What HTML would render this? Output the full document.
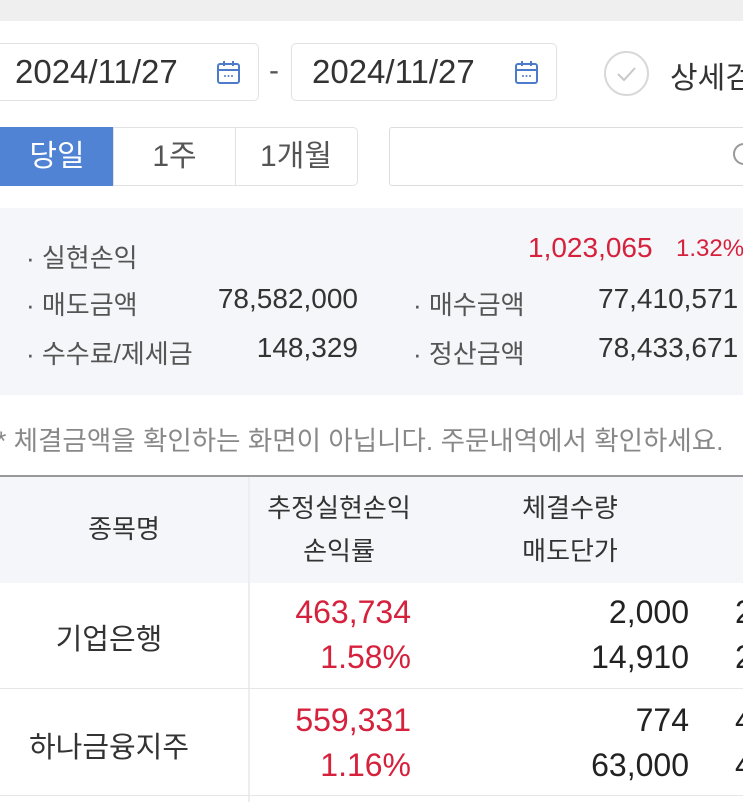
<!DOCTYPE html>
<html><head><meta charset="utf-8"><style>
*{margin:0;padding:0;box-sizing:border-box}
body{width:743px;height:802px;overflow:hidden;background:#fff;font-family:"Liberation Sans","Noto Sans CJK KR",sans-serif;color:#222;position:relative}
.a{position:absolute;white-space:nowrap}
.box{position:absolute;border:1px solid #e2e2e2;border-radius:5px;background:#fff}
.red{color:#d6213d}
.r{text-align:right}
</style></head><body>
<div class="a" style="left:0;top:0;width:743px;height:21px;background:#efefef"></div>
<div class="box" style="left:-10px;top:43px;width:269px;height:58px"></div>
<div class="a" style="left:15px;top:53px;font-size:33px;color:#333">2024/11/27</div>
<svg class="a" style="left:216px;top:60px" width="26" height="26" viewBox="0 0 26 26"><rect x="2" y="4" width="21" height="19" rx="2" fill="none" stroke="#4d7bc9" stroke-width="2"/><line x1="2" y1="10" x2="23" y2="10" stroke="#4d7bc9" stroke-width="2"/><line x1="8" y1="1" x2="8" y2="6" stroke="#4d7bc9" stroke-width="2"/><line x1="17" y1="1" x2="17" y2="6" stroke="#4d7bc9" stroke-width="2"/><circle cx="9" cy="16" r="1" fill="#4d7bc9"/><circle cx="12.5" cy="16" r="1" fill="#4d7bc9"/><circle cx="16" cy="16" r="1" fill="#4d7bc9"/></svg>
<div class="a" style="left:269px;top:54px;font-size:30px;color:#555">-</div>
<div class="box" style="left:291px;top:43px;width:266px;height:58px"></div>
<div class="a" style="left:312px;top:53px;font-size:33px;color:#333">2024/11/27</div>
<svg class="a" style="left:514px;top:60px" width="26" height="26" viewBox="0 0 26 26"><rect x="2" y="4" width="21" height="19" rx="2" fill="none" stroke="#4d7bc9" stroke-width="2"/><line x1="2" y1="10" x2="23" y2="10" stroke="#4d7bc9" stroke-width="2"/><line x1="8" y1="1" x2="8" y2="6" stroke="#4d7bc9" stroke-width="2"/><line x1="17" y1="1" x2="17" y2="6" stroke="#4d7bc9" stroke-width="2"/><circle cx="9" cy="16" r="1" fill="#4d7bc9"/><circle cx="12.5" cy="16" r="1" fill="#4d7bc9"/><circle cx="16" cy="16" r="1" fill="#4d7bc9"/></svg>
<svg class="a" style="left:603px;top:50px" width="47" height="47"><circle cx="23.5" cy="23.5" r="21.5" fill="none" stroke="#d8d8d8" stroke-width="2"/><path d="M15 24 L21 30 L32 18" fill="none" stroke="#c8c8c8" stroke-width="2"/></svg>
<div class="a" style="left:670px;top:53px;font-size:30px;color:#333">상세검색</div>

<div class="a" style="left:0;top:127px;width:114px;height:59px;background:#5183d4;color:#fff;font-size:30px;text-align:center;line-height:59px">당일</div>
<div class="box" style="left:113px;top:127px;width:245px;height:59px;border-radius:0 5px 5px 0"></div>
<div class="a" style="left:235px;top:128px;width:1px;height:57px;background:#e2e2e2"></div>
<div class="a" style="left:114px;top:127px;width:121px;font-size:30px;color:#555;text-align:center;line-height:59px">1주</div>
<div class="a" style="left:235px;top:127px;width:122px;font-size:30px;color:#555;text-align:center;line-height:59px">1개월</div>
<div class="a" style="left:389px;top:127px;width:370px;height:59px;border:1.5px solid #ddd;border-radius:3px"></div>
<svg class="a" style="left:730px;top:140px" width="20" height="30"><circle cx="14" cy="14" r="10" fill="none" stroke="#999" stroke-width="2"/></svg>

<div class="a" style="left:0;top:208px;width:743px;height:187px;background:#f5f6f9"></div>
<div class="a" style="left:26px;top:238px;font-size:26px;color:#555">· 실현손익</div>
<div class="a red" style="left:528px;top:232px;font-size:28px">1,023,065</div>
<div class="a red" style="left:676px;top:235px;font-size:24px">1.32%</div>
<div class="a" style="left:26px;top:285px;font-size:26px;color:#555">· 매도금액</div>
<div class="a r" style="left:180px;width:178px;top:283px;font-size:28px;color:#333">78,582,000</div>
<div class="a" style="left:413px;top:285px;font-size:26px;color:#555">· 매수금액</div>
<div class="a" style="left:598px;top:283px;font-size:28px;color:#333">77,410,571</div>
<div class="a" style="left:26px;top:334px;font-size:26px;color:#555">· 수수료/제세금</div>
<div class="a r" style="left:180px;width:178px;top:332px;font-size:28px;color:#333">148,329</div>
<div class="a" style="left:413px;top:334px;font-size:26px;color:#555">· 정산금액</div>
<div class="a" style="left:598px;top:332px;font-size:28px;color:#333">78,433,671</div>

<div class="a" style="left:-4px;top:419px;font-size:26.5px;color:#888">* 체결금액을 확인하는 화면이 아닙니다. 주문내역에서 확인하세요.</div>

<div class="a" style="left:0;top:475px;width:743px;height:2px;background:#999"></div>
<div class="a" style="left:0;top:477px;width:743px;height:106px;background:#f5f6f9"></div>
<div class="a" style="left:248px;top:477px;width:2px;height:325px;background:#eceef2"></div>
<div class="a" style="left:0;top:688px;width:743px;height:1px;background:#e6e6e6"></div>
<div class="a" style="left:0;top:795px;width:743px;height:1px;background:#e6e6e6"></div>
<div class="a" style="left:0;top:509px;width:248px;text-align:center;font-size:26px;color:#333">종목명</div>
<div class="a" style="left:250px;top:487px;width:178px;text-align:center;font-size:26px;color:#333;line-height:43px">추정실현손익<br>손익률</div>
<div class="a" style="left:500px;top:487px;width:140px;text-align:center;font-size:26px;color:#333;line-height:43px">체결수량<br>매도단가</div>

<div class="a" style="left:0;top:616px;width:218px;text-align:center;font-size:29px;color:#333">기업은행</div>
<div class="a r red" style="left:250px;width:161px;top:590px;font-size:32px;line-height:45px">463,734<br>1.58%</div>
<div class="a r" style="left:480px;width:209px;top:590px;font-size:32px;line-height:45px;color:#222">2,000<br>14,910</div>
<div class="a" style="left:735px;top:590px;font-size:32px;line-height:45px">2<br>2</div>

<div class="a" style="left:0;top:724px;width:218px;text-align:center;font-size:29px;color:#333">하나금융지주</div>
<div class="a r red" style="left:250px;width:161px;top:698px;font-size:32px;line-height:45px">559,331<br>1.16%</div>
<div class="a r" style="left:480px;width:209px;top:698px;font-size:32px;line-height:45px;color:#222">774<br>63,000</div>
<div class="a" style="left:735px;top:698px;font-size:32px;line-height:45px">4<br>4</div>
</body></html>
